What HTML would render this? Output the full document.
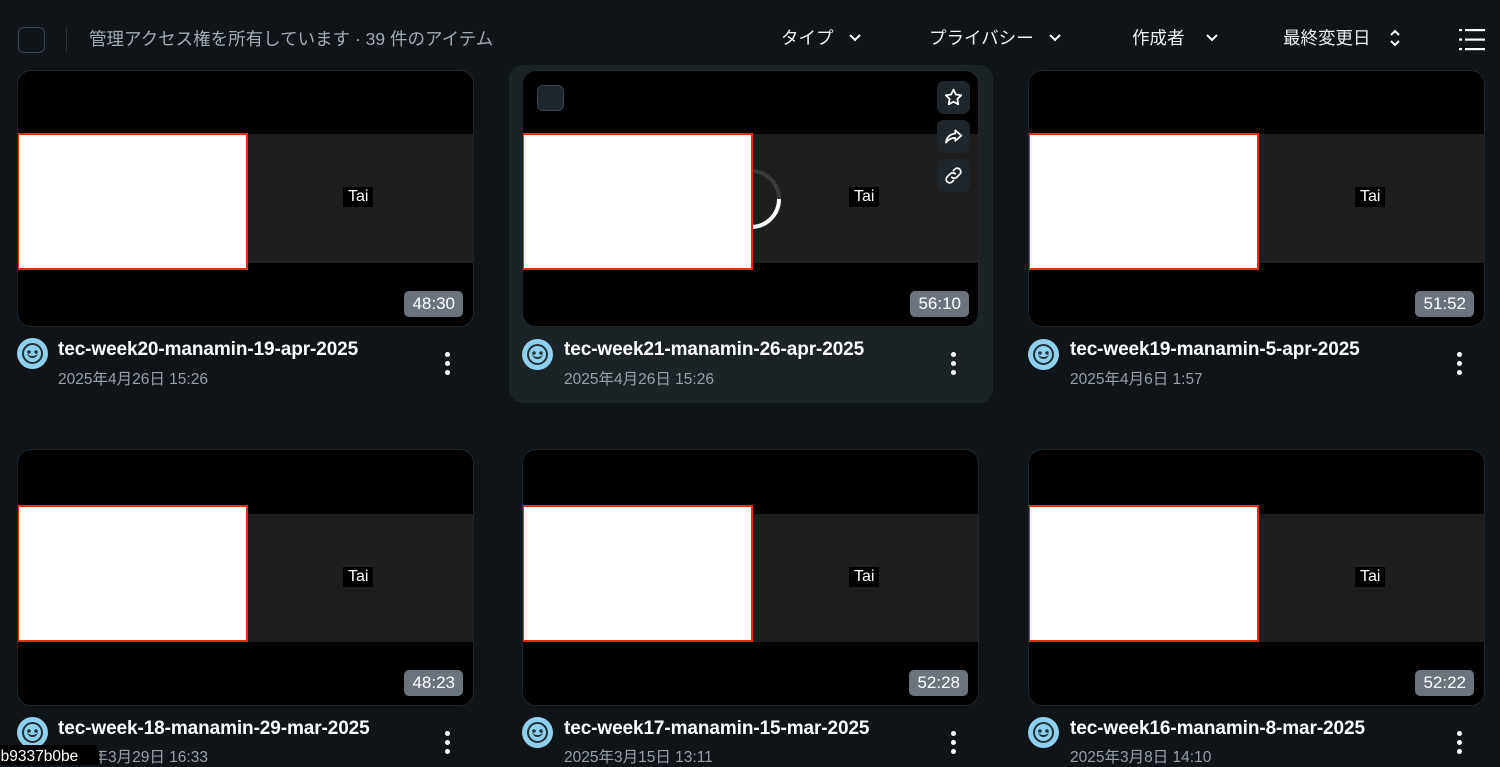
<!DOCTYPE html>
<html><head><meta charset="utf-8">
<style>
*{margin:0;padding:0;box-sizing:border-box}
body{width:1500px;height:760px;overflow:hidden;background:#0f1418;font-family:"Liberation Sans","Noto Sans CJK JP",sans-serif;color:#fff;position:relative}
.abs{position:absolute}
.top-cb{left:18px;top:27px;width:27px;height:26px;border:1.5px solid #3e464d;border-radius:6px}
.sep{left:66px;top:27px;width:1px;height:25px;background:#2a3136}
.count{left:89px;top:26px;font-size:17.5px;color:#a4abb1;white-space:nowrap}
.flt{top:25px;font-size:17.5px;color:#f2f2f2;white-space:nowrap;display:flex;align-items:center}
.flt svg{margin-left:14px}
.hov{left:509px;top:65px;width:484px;height:338px;background:#1c2327;border-radius:14px}
.thumb{width:457px;height:257px;background:#000;border-radius:14px;overflow:hidden;border:1px solid #1f262b}
.band{position:absolute;left:0;right:0;background:#1e1e1e}
.wbox{position:absolute;left:-1px;width:231px;background:#fff;border:2px solid #ee2a10}
.tai{position:absolute;background:#000;font-size:16px;padding:1px 5px;color:#fff}
.dur{position:absolute;right:10px;bottom:9px;background:#6b737c;border-radius:5px;font-size:17px;padding:3px 8px;color:#fff}
.av{width:31px;height:31px;border-radius:50%;background:#8fd0ee}
.title{font-size:19px;font-weight:bold;white-space:nowrap;letter-spacing:-0.1px}
.date{font-size:15.5px;color:#9aa1a7;white-space:nowrap}
.dots{width:6px}
.dots i{display:block;width:5px;height:5px;border-radius:50%;background:#fff;margin-bottom:4px}
.ib{position:absolute;width:32px;height:32px;background:#1e262b;border-radius:7px;display:flex;align-items:center;justify-content:center}
.av::after{content:"";position:absolute;left:5px;top:5px;width:21px;height:21px;border:2px solid #233038;border-radius:50%;box-sizing:border-box}
.av::before{content:"";position:absolute;left:10px;top:12px;width:11px;height:8px;border-bottom:2px solid #233038;border-radius:0 0 6px 6px;box-sizing:border-box;background:radial-gradient(circle at 2px 2px,#233038 1.5px,transparent 2px),radial-gradient(circle at 9px 2px,#233038 1.5px,transparent 2px)}
</style></head><body>
<div class="abs top-cb"></div>
<div class="abs sep"></div>
<div class="abs count">管理アクセス権を所有しています · 39 件のアイテム</div>
<div class="abs flt" style="left:781px">タイプ<svg width="14" height="10" viewBox="0 0 14 10"><path d="M2 2l5 5 5-5" stroke="#fff" stroke-width="2" fill="none"/></svg></div>
<div class="abs flt" style="left:929px">プライバシー<svg width="14" height="10" viewBox="0 0 14 10"><path d="M2 2l5 5 5-5" stroke="#fff" stroke-width="2" fill="none"/></svg></div>
<div class="abs flt" style="left:1132px">作成者<svg width="14" height="10" viewBox="0 0 14 10" style="margin-left:20px"><path d="M2 2l5 5 5-5" stroke="#fff" stroke-width="2" fill="none"/></svg></div>
<div class="abs flt" style="left:1283px">最終変更日<svg width="12" height="22" viewBox="0 0 12 22" style="margin-left:18px"><path d="M2 8l4-4 4 4M2 14l4 4 4-4" stroke="#fff" stroke-width="2" fill="none"/></svg></div>
<svg class="abs" style="left:1459px;top:28px" width="26" height="24" viewBox="0 0 26 24"><g fill="#fff"><rect x="0" y="1" width="3" height="2.2"/><rect x="0" y="10.5" width="3" height="2.2"/><rect x="0" y="20" width="3" height="2.2"/><rect x="6" y="1" width="20" height="2.2"/><rect x="6" y="10.5" width="20" height="2.2"/><rect x="6" y="20" width="20" height="2.2"/></g></svg>

<div class="abs hov"></div>

<div class="abs thumb" style="left:17px;top:70px"><div class="band" style="top:63px;height:129px"></div><div class="wbox" style="top:62px;height:137px"></div><div class="tai" style="left:325px;top:116px">Tai</div><div class="dur">48:30</div></div>
<div class="abs thumb" style="left:522px;top:70px"><div class="band" style="top:63px;height:129px"></div><svg style="position:absolute;left:194px;top:94px" width="68" height="68" viewBox="0 0 68 68"><circle cx="34" cy="34" r="28" stroke="#3a3a3a" stroke-width="4" fill="none"/><path d="M62 34A28 28 0 0 1 34 62" stroke="#fff" stroke-width="4" fill="none"/></svg><div class="wbox" style="top:62px;height:137px"></div><div class="tai" style="left:326px;top:116px">Tai</div><div class="dur" style="right:9px">56:10</div>
<div style="position:absolute;left:14px;top:14px;width:27px;height:26px;border:1.5px solid #3b444b;border-radius:6px;background:#1d262d"></div>
<div class="ib" style="left:414px;top:10px;width:33px;height:33px"><svg width="21" height="21" viewBox="0 0 24 24"><path d="M12 3l2.7 5.6 6.1.8-4.4 4.3 1.1 6.1L12 16.9 6.5 19.8l1.1-6.1L3.2 9.4l6.1-.8z" stroke="#fff" stroke-width="2" fill="none" stroke-linejoin="round"/></svg></div>
<div class="ib" style="left:414px;top:49px;width:33px;height:33px"><svg width="21" height="21" viewBox="0 0 24 24"><path d="M14 5l7 6-7 6v-3.5C9 13.5 6 15 3.5 19 4 13 7.5 9.5 14 8.5z" stroke="#fff" stroke-width="2" fill="none" stroke-linejoin="round"/></svg></div>
<div class="ib" style="left:414px;top:88px;width:33px;height:33px"><svg width="21" height="21" viewBox="0 0 24 24"><path d="M10 14a4 4 0 0 0 5.7 0l3.5-3.5a4 4 0 0 0-5.7-5.7L12 6.3M14 10a4 4 0 0 0-5.7 0l-3.5 3.5a4 4 0 0 0 5.7 5.7L12 17.7" stroke="#fff" stroke-width="2" fill="none" stroke-linecap="round"/></svg></div>
</div>
<div class="abs thumb" style="left:1028px;top:70px"><div class="band" style="top:63px;height:129px"></div><div class="wbox" style="top:62px;height:137px"></div><div class="tai" style="left:326px;top:116px">Tai</div><div class="dur">51:52</div></div>

<div class="abs av" style="left:17px;top:338px"></div>
<div class="abs title" style="left:58px;top:339px">tec-week20-manamin-19-apr-2025</div>
<div class="abs date" style="left:58px;top:367px">2025年4月26日 15:26</div>
<div class="abs dots" style="left:445px;top:352px"><i></i><i></i><i></i></div>
<div class="abs av" style="left:522px;top:339px"></div>
<div class="abs title" style="left:564px;top:339px">tec-week21-manamin-26-apr-2025</div>
<div class="abs date" style="left:564px;top:367px">2025年4月26日 15:26</div>
<div class="abs dots" style="left:951px;top:352px"><i></i><i></i><i></i></div>
<div class="abs av" style="left:1028px;top:339px"></div>
<div class="abs title" style="left:1070px;top:339px">tec-week19-manamin-5-apr-2025</div>
<div class="abs date" style="left:1070px;top:367px">2025年4月6日 1:57</div>
<div class="abs dots" style="left:1457px;top:352px"><i></i><i></i><i></i></div>

<div class="abs thumb" style="left:17px;top:449px"><div class="band" style="top:64px;height:128px"></div><div class="wbox" style="top:55px;height:137px"></div><div class="tai" style="left:325px;top:117px">Tai</div><div class="dur">48:23</div></div>
<div class="abs thumb" style="left:522px;top:449px"><div class="band" style="top:64px;height:128px"></div><div class="wbox" style="top:55px;height:137px"></div><div class="tai" style="left:326px;top:117px">Tai</div><div class="dur">52:28</div></div>
<div class="abs thumb" style="left:1028px;top:449px"><div class="band" style="top:64px;height:128px"></div><div class="wbox" style="top:55px;height:137px"></div><div class="tai" style="left:326px;top:117px">Tai</div><div class="dur">52:22</div></div>

<div class="abs av" style="left:17px;top:717px"></div>
<div class="abs title" style="left:58px;top:718px">tec-week-18-manamin-29-mar-2025</div>
<div class="abs date" style="left:58px;top:745px">2025年3月29日 16:33</div>
<div class="abs dots" style="left:445px;top:731px"><i></i><i></i><i></i></div>
<div class="abs av" style="left:522px;top:717px"></div>
<div class="abs title" style="left:564px;top:718px">tec-week17-manamin-15-mar-2025</div>
<div class="abs date" style="left:564px;top:745px">2025年3月15日 13:11</div>
<div class="abs dots" style="left:951px;top:731px"><i></i><i></i><i></i></div>
<div class="abs av" style="left:1028px;top:717px"></div>
<div class="abs title" style="left:1070px;top:718px">tec-week16-manamin-8-mar-2025</div>
<div class="abs date" style="left:1070px;top:745px">2025年3月8日 14:10</div>
<div class="abs dots" style="left:1457px;top:731px"><i></i><i></i><i></i></div>

<div class="abs" style="left:0;top:745px;width:99px;height:20px;background:#000;border-radius:0 6px 0 0;font-size:15.5px;padding:3px 0 0 0;overflow:hidden;white-space:nowrap;text-indent:-8px">bb9337b0be</div>
</body></html>
